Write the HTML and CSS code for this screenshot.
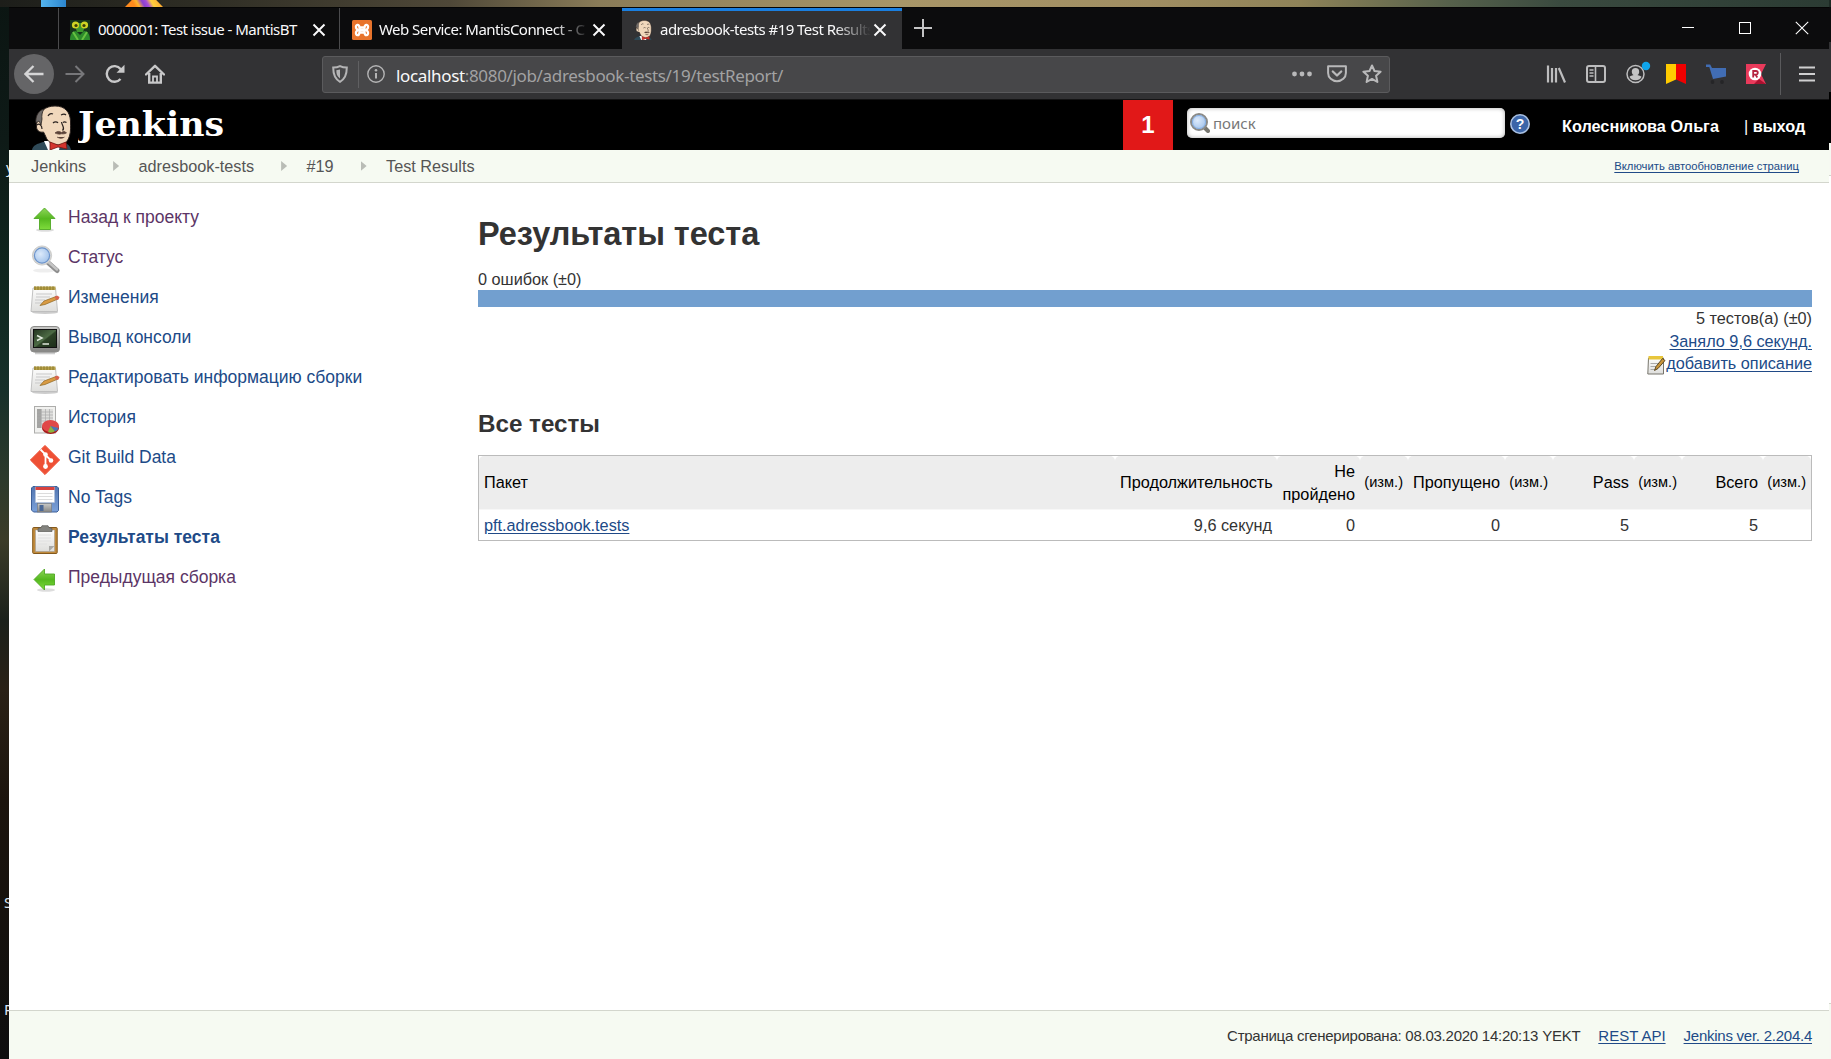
FILE: index.html
```html
<!DOCTYPE html>
<html lang="ru">
<head>
<meta charset="utf-8">
<title>adresbook-tests #19 Test Results [Jenkins]</title>
<link rel="stylesheet" href="styles.css">
</head>
<body>
<svg class="defs" width="0" height="0" aria-hidden="true">
  <defs>
    <linearGradient id="gGreen" x1="0" y1="0" x2="0" y2="1"><stop offset="0" stop-color="#8fd65a"/><stop offset=".5" stop-color="#55b81f"/><stop offset="1" stop-color="#7fdc3c"/></linearGradient>
    <linearGradient id="gPaper" x1="0" y1="0" x2="0" y2="1"><stop offset="0" stop-color="#fdfdfd"/><stop offset="1" stop-color="#dededc"/></linearGradient>
    <radialGradient id="gLens" cx=".4" cy=".4" r=".7"><stop offset="0" stop-color="#dceafb"/><stop offset="1" stop-color="#9dbfe9"/></radialGradient>
    <linearGradient id="gScreen" x1="0" y1="0" x2="1" y2="1"><stop offset="0" stop-color="#22331f"/><stop offset=".5" stop-color="#4d6b45"/><stop offset=".55" stop-color="#2c4226"/><stop offset="1" stop-color="#1c2d19"/></linearGradient>
    <linearGradient id="gSteel" x1="0" y1="0" x2="0" y2="1"><stop offset="0" stop-color="#c9c9c7"/><stop offset="1" stop-color="#858583"/></linearGradient>
    <linearGradient id="gFloppy" x1="0" y1="0" x2="0" y2="1"><stop offset="0" stop-color="#5376b0"/><stop offset="1" stop-color="#7ba1da"/></linearGradient>
  </defs>
  <symbol id="butler" viewBox="0 0 40 45">
    <path d="M0 45c1-5 5-6 11-8l18 0c6 1 9 3 10 8z" fill="#2f4a58"/>
    <path d="M12 36l17 0-2 9-11 0z" fill="#fff"/>
    <path d="M5 17C6 6 14 1 23 1c10 0 15 6 15.500 15 0 6 .5 10-1 15-2 6-5 9-11 9-6 0-11-3-13-9l-2-4c-4 1-7-2-7-5 0-3 0-4 .5-5z" fill="#f1d8bc" stroke="#2b2320" stroke-width="1"/>
    <path d="M4 18C3 11 7 5 12 4c-2 3-2.500 7-2 10l-1 6-2-4z" fill="#6f6b69" stroke="#2b2320" stroke-width=".8"/>
    <path d="M5 20c2-2 5 0 5 4M16 11c1-2 3-3 5-2M29 10c2-1 4-1 5 0M21 18c1.500-1.500 4-1.500 5 0M31 17.500c1-1 2-1 3.500 0M29.500 17c.5 4 4 6 1 8.500" fill="none" stroke="#2b2320" stroke-width="1.200"/>
    <path d="M23 28c2-2 4.500-2 6.500-.5 2-1.500 3.500-1.500 5 .5-2.500 1-3.500 1-5 .8-2 .7-4 .4-6.500-.8zM25 32c3 1.800 5 1.800 7.500 0" fill="#5a4238" stroke="#5a4238" stroke-width=".7"/>
    <path d="M18 37l8 3 8-3 1 7-9-2-8 3z" fill="#d4342d" stroke="#70150f" stroke-width=".8"/>
  </symbol>
  <symbol id="arrow-up" viewBox="0 0 30 30"><ellipse cx="15" cy="25" rx="9" ry="1.8" fill="#0002"/><path d="M14.500 3L25 13.500H20.500V24.500H9.500V13.500H4z" fill="url(#gGreen)" stroke="#4fa824" stroke-width=".9"/></symbol>
  <symbol id="arrow-left" viewBox="0 0 30 30"><ellipse cx="16" cy="25" rx="9" ry="1.800" fill="#0002"/><path d="M4 14.500L14.500 4V9H24.500V20H14.500V25z" fill="url(#gGreen)" stroke="#4fa824" stroke-width=".9"/></symbol>
  <symbol id="lens" viewBox="0 0 30 30"><ellipse cx="14" cy="25.500" rx="11" ry="2" fill="#0001"/><path d="M18.500 18L27 25.500" stroke="#8e8e8e" stroke-width="5" stroke-linecap="round"/><path d="M19 17.500L27 24.500" stroke="#c4c4c4" stroke-width="2.500" stroke-linecap="round"/><circle cx="12" cy="10.500" r="9.600" fill="#d8d8d6" stroke="#bdbdbb" stroke-width=".7"/><circle cx="12" cy="10.500" r="7.600" fill="url(#gLens)" stroke="#6c94cc" stroke-width="1.200"/></symbol>
  <symbol id="notepad" viewBox="0 0 30 30"><ellipse cx="15" cy="27.500" rx="13" ry="1.500" fill="#0003"/><path d="M3 3H25.500L27.500 26.500H1z" fill="url(#gPaper)" stroke="#bbb" stroke-width=".9"/><path d="M4 1.500H25.500V5H4z" fill="#b8a24a"/><path d="M5 1.200V5M8 1.200V5M11 1.200V5M14 1.200V5M17 1.200V5M20 1.200V5M23 1.200V5" stroke="#7e6c25" stroke-width=".8"/><path d="M6 9H22M6 12H20M5 15H15M5 18H12" stroke="#c9c9c9"/><path d="M10 20.500L14 16 26 11.500 28 14 15 19.500z" fill="#d99b43" stroke="#8d6420" stroke-width=".7"/><path d="M24.500 12L27 10.500 29.500 12 28.500 14.500 26.500 15z" fill="#d9624f"/></symbol>
  <symbol id="terminal" viewBox="0 0 30 30"><rect x=".5" y="1.500" width="29" height="25.500" rx="3.500" fill="url(#gSteel)" stroke="#8b8b89"/><rect x="3.500" y="4.500" width="23" height="18" fill="url(#gScreen)" stroke="#111"/><path d="M7 10.500l5 2.500-5 2.500M12.500 19H19" fill="none" stroke="#dfe8dc" stroke-width="1.500"/><path d="M5 28.300H25" stroke="#0003" stroke-width="2"/></symbol>
  <symbol id="report" viewBox="0 0 30 30"><rect x="4.500" y="1.500" width="21" height="26.500" fill="#f1f1ef" stroke="#adadab"/><path d="M7 4H23V23H7z" fill="#dededc"/><path d="M7 4H11V23H7z" fill="#a3a3a1"/><path d="M7 7H23M7 10H23M7 13H23M7 16H23M7 19H23M11.500 4V23M15.500 4V23M19.500 4V23" stroke="#aaa" stroke-width=".7"/><ellipse cx="20.500" cy="23" rx="8.500" ry="6" fill="#a51c1c"/><ellipse cx="20.500" cy="21" rx="8.500" ry="6" fill="#e04848"/><path d="M20.500 21L18 27C20 28 23 28 25 26z" fill="#8cb43f"/><path d="M20.500 21L28.500 23C28 25 26.500 26 25 26.500z" fill="#4c76b5"/></symbol>
  <symbol id="git" viewBox="0 0 30 30"><path d="M15 .4L29.600 15 15 29.600.4 15z" fill="#ee5035" stroke="#ee5035" stroke-linejoin="round"/><path d="M10.500 4.500L15.500 9.500V21M15.500 10L21 15.500" fill="none" stroke="#fff" stroke-width="1.800"/><circle cx="15.500" cy="9.500" r="2.300" fill="#fff"/><circle cx="15.500" cy="21.500" r="2.400" fill="#fff"/><circle cx="21" cy="15.500" r="2.300" fill="#fff"/></symbol>
  <symbol id="floppy" viewBox="0 0 30 30"><path d="M3 1.500H27L28.500 3V25.500L27 27H3.500L1.500 25V3z" fill="url(#gFloppy)" stroke="#3d5f98"/><rect x="5.500" y="2" width="19" height="15.500" fill="#fff" stroke="#b5c2d8" stroke-width=".6"/><path d="M5.500 2H24.500V5H5.500z" fill="#d8433f"/><path d="M7.500 8.500H22.500M7.500 11.500H22.500M7.500 14.500H22.500" stroke="#d3d3d3" stroke-width=".8"/><rect x="7.500" y="18.500" width="14" height="8.500" fill="url(#gSteel)" stroke="#777" stroke-width=".6"/><rect x="9.500" y="20" width="4" height="6" fill="#4a6796"/></symbol>
  <symbol id="clipboard" viewBox="0 0 30 30"><rect x="2.700" y="2.500" width="24.500" height="26" rx="1" fill="#c08a3c" stroke="#84591c"/><rect x="5.500" y="5" width="19" height="21.500" fill="url(#gPaper)" stroke="#999" stroke-width=".5"/><path d="M19 26.500L24.500 21H19z" fill="#a9a9a7"/><path d="M8 10H21M8 13H21M8 16H21M8 19H17" stroke="#e0e0e0"/><path d="M8 6.500V3.500L11 2.500 12 .7H18L19 2.500 22 3.500V6.500z" fill="#83837f" stroke="#5a5a58" stroke-width=".7"/></symbol>
  <symbol id="x" viewBox="0 0 14 14"><path d="M1.500 1.500L12.500 12.500M12.500 1.500L1.500 12.500" fill="none" stroke="currentColor" stroke-width="2"/></symbol>
</svg>

<div class="desktop">
  <div class="wall-top"></div>
  <div class="desk-icon desk-blue"></div>
  <div class="desk-icon desk-fox"></div>
  <span class="desk-label label-a">y</span>
  <span class="desk-label label-b">S</span>
  <span class="desk-label label-c">P</span>
  <div class="back-window"></div>

  <div class="window">
    <div class="tabstrip">
      <div class="tab-pad"></div>
      <div class="tab">
        <svg class="fav" viewBox="0 0 20 20"><rect width="20" height="20" fill="#16351b"/><path d="M0 20C0 14 3 11 6 11L10 15 14 11C18 11 20 15 20 20z" fill="#2d8c2c"/><path d="M3 12L8 20M17 12L12 20" stroke="#67c141" stroke-width="2"/><path d="M4 3H16L13 12H7z" fill="#3f982d"/><circle cx="5.500" cy="5" r="3.600" fill="#cfd424"/><circle cx="14.500" cy="5" r="3.600" fill="#cfd424"/><circle cx="6" cy="5.500" r="1.600" fill="#3a3d08"/><circle cx="14" cy="5.500" r="1.600" fill="#3a3d08"/></svg>
        <span class="tab-title t1">0000001: Test issue - MantisBT</span>
        <svg class="tab-x"><use href="#x"/></svg>
      </div>
      <div class="tab">
        <svg class="fav" viewBox="0 0 20 20"><rect width="20" height="20" rx="1.500" fill="#e8742c"/><path d="M7.500 7.500H12.500V12.500H7.500zM7.500 7.500C7 3.500 3.500 4.500 4 7.300 4 9 5.500 9 5.500 10S4 11 4 12.700C3.500 15.500 7 16.500 7.500 12.500M12.500 7.500C13 3.500 16.500 4.500 16 7.300 16 9 14.500 9 14.500 10S16 11 16 12.700C16.500 15.500 13 16.500 12.500 12.500" fill="none" stroke="#fff" stroke-width="2.300"/><rect x="7" y="8.600" width="6" height="2.800" fill="#fff"/></svg>
        <span class="tab-title fade t2">Web Service: MantisConnect - С</span>
        <svg class="tab-x"><use href="#x"/></svg>
      </div>
      <div class="tab active">
        <svg class="fav"><use href="#butler"/></svg>
        <span class="tab-title fade t3">adresbook-tests #19 Test Results</span>
        <svg class="tab-x"><use href="#x"/></svg>
      </div>
      <svg class="tab-new" viewBox="0 0 18 18"><path d="M9 0V18M0 9H18" stroke="#c4c4c5" stroke-width="2"/></svg>
      <div class="win-buttons">
        <svg viewBox="0 0 14 14"><path d="M1 6.500H13" stroke="#fff"/></svg>
        <svg viewBox="0 0 14 14"><rect x="1.500" y="1.500" width="11" height="11" fill="none" stroke="#fff"/></svg>
        <svg viewBox="0 0 14 14"><path d="M.8.8L13.200 13.200M13.200.8L.8 13.200" stroke="#fff" stroke-width="1.100"/></svg>
      </div>
    </div>

    <div class="toolbar">
      <div class="nav">
        <span class="back"><svg viewBox="0 0 20 20"><path d="M19.500 10H2M9.500 2L1.500 10 9.500 18" fill="none" stroke="#d6d6d7" stroke-width="2.300"/></svg></span>
        <svg viewBox="0 0 20 20"><path d="M.5 10H18M10.500 2L18.500 10 10.500 18" fill="none" stroke="#77777a" stroke-width="2"/></svg>
        <svg viewBox="0 0 20 20"><path d="M15.500 15A7.800 7.800 0 1 1 15.600 5L17.500 7.200" fill="none" stroke="#c8c8c9" stroke-width="2.400"/><path d="M19.500.8V8.800H11.500z" fill="#c8c8c9"/></svg>
        <svg viewBox="0 0 20 20"><path d="M1 10.500L10 1.800 19 10.500" fill="none" stroke="#c8c8c9" stroke-width="2.400" stroke-linecap="round" stroke-linejoin="round"/><path d="M4.200 9V18.600H15.800V9" fill="none" stroke="#c8c8c9" stroke-width="2.400"/><path d="M8 18V12.500H12V18" fill="none" stroke="#c8c8c9" stroke-width="1.800"/></svg>
      </div>
      <div class="urlbar">
        <svg class="shield" viewBox="0 0 16 18"><path d="M8 1.200C10 2.200 12.500 2.600 14.800 2.600 14.800 9.500 13.500 14 8 16.800 2.500 14 1.200 9.500 1.200 2.600 3.500 2.600 6 2.200 8 1.200z" fill="none" stroke="#b4b4b5" stroke-width="2"/><path d="M8 4.500V13.500C5 11.500 4.300 9 4.300 5.300z" fill="#b4b4b5"/></svg>
        <i class="url-sep"></i>
        <svg class="info" viewBox="0 0 18 18"><circle cx="9" cy="9" r="8.200" fill="none" stroke="#b4b4b5" stroke-width="1.400"/><path d="M9 8V13.500" stroke="#b4b4b5" stroke-width="2"/><circle cx="9" cy="5.300" r="1.300" fill="#b4b4b5"/></svg>
        <span class="url"><b>localhost</b>:8080/job/adresbook-tests/19/testReport/</span>
        <span class="url-actions">
          <svg viewBox="0 0 20 20"><circle cx="2.500" cy="10" r="2.400" fill="#b9b9ba"/><circle cx="10" cy="10" r="2.400" fill="#b9b9ba"/><circle cx="17.500" cy="10" r="2.400" fill="#b9b9ba"/></svg>
          <svg viewBox="0 0 20 20"><path d="M1.100 2.200H18.900V9A8.900 8.200 0 0 1 1.100 9z" fill="none" stroke="#b9b9ba" stroke-width="2" stroke-linejoin="round"/><path d="M5.800 7.500L10 11.500 14.200 7.500" fill="none" stroke="#b9b9ba" stroke-width="2.300" stroke-linecap="round" stroke-linejoin="round"/></svg>
          <svg viewBox="0 0 20 20"><path d="M10 1.500L12.500 7 18.600 7.700 14.100 11.800 15.400 18 10 14.900 4.600 18 5.900 11.800 1.400 7.700 7.500 7z" fill="none" stroke="#b9b9ba" stroke-width="2" stroke-linejoin="round"/></svg>
        </span>
      </div>
      <div class="tools">
        <svg viewBox="0 0 20 20"><path d="M2 1.500V18.500M6 4V18.500M10 4V18.500M12.800 4L19 18.500" fill="none" stroke="#bdbdbe" stroke-width="2.200"/></svg>
        <svg viewBox="0 0 20 20"><rect x="1" y="2" width="18" height="16" rx="2" fill="none" stroke="#bdbdbe" stroke-width="2"/><path d="M9.500 2V18" stroke="#bdbdbe" stroke-width="1.600"/><path d="M3.500 6H7.500M3.500 9H7.500M3.500 12H7.500" stroke="#bdbdbe" stroke-width="1.400"/></svg>
        <svg viewBox="0 0 20 20" overflow="visible"><circle cx="9.500" cy="10" r="8.500" fill="none" stroke="#bdbdbe" stroke-width="1.500"/><circle cx="9.500" cy="7.700" r="3.700" fill="#c4c4c5"/><path d="M3.500 12.800C6 10.500 13 10.500 15.500 12.800 14 17.500 5 17.500 3.500 12.800z" fill="#c4c4c5"/><circle cx="20" cy="2" r="4.200" fill="#0fa4ea"/></svg>
        <svg viewBox="0 0 20 20"><path d="M0 0H10V15.500L0 20z" fill="#ffcb00"/><path d="M10 0H20V20L10 15.500z" fill="#f00000"/></svg>
        <svg viewBox="0 0 20 20"><path d="M0 .5H4.200L6 4H20V12.500L7 15 3.300 3H0z" fill="#416db4"/><circle cx="6.500" cy="18" r="1.900" fill="#252527"/><circle cx="16" cy="18" r="1.900" fill="#252527"/></svg>
        <svg viewBox="0 0 20 20"><path d="M0 0H20L15 10 20 20H0z" fill="#e93a5b"/><path d="M13 15L20 20H8z" fill="#a8112f"/><circle cx="9" cy="10" r="6.300" fill="#fff"/><path d="M7.200 13.500V7H10A1.800 1.800 0 0 1 10 10.600H7.200M9.500 10.500L11.300 13.500" fill="none" stroke="#b5233f" stroke-width="1.800"/></svg>
      </div>
      <i class="tool-sep"></i>
      <svg class="menu" viewBox="0 0 16 16"><path d="M.5 1.500H15.500M.5 8H15.500M.5 14.500H15.500" stroke="#cfcfd0" stroke-width="2.200" stroke-linecap="round"/></svg>
    </div>

    <div class="page">
      <header class="jk-header">
        <svg class="jk-head"><use href="#butler"/></svg>
        <svg class="jk-word" width="150" height="50"><text x="0" y="36" textLength="146" lengthAdjust="spacingAndGlyphs">Jenkins</text></svg>
        <span class="alert">1</span>
        <div class="search">
          <svg viewBox="0 0 20 20"><path d="M14 14L18 18" stroke="#77766f" stroke-width="4" stroke-linecap="round"/><circle cx="9" cy="9" r="8" fill="url(#gLens)" stroke="#8b8b88" stroke-width="2"/><circle cx="9" cy="9" r="6.500" fill="none" stroke="#84aee4"/></svg>
          <span>поиск</span>
        </div>
        <svg class="help" viewBox="0 0 20 20"><circle cx="10" cy="10" r="9.200" fill="#3b65a8" stroke="#a9c0e2" stroke-width="1.600"/><text x="10" y="15" text-anchor="middle">?</text></svg>
        <a class="user">Колесникова Ольга</a>
        <span class="logout"><i>|</i> <a>выход</a></span>
      </header>

      <nav class="crumbs">
        <span>Jenkins</span><i></i><span>adresbook-tests</span><i></i><span>#19</span><i></i><span>Test Results</span>
        <a class="auto">Включить автообновление страниц</a>
      </nav>

      <div class="body">
        <aside class="tasks">
          <a class="visited"><svg><use href="#arrow-up"/></svg><span>Назад к проекту</span></a>
          <a class="visited"><svg><use href="#lens"/></svg><span>Статус</span></a>
          <a><svg><use href="#notepad"/></svg><span>Изменения</span></a>
          <a><svg><use href="#terminal"/></svg><span>Вывод консоли</span></a>
          <a><svg><use href="#notepad"/></svg><span>Редактировать информацию сборки</span></a>
          <a><svg><use href="#report"/></svg><span>История</span></a>
          <a><svg><use href="#git"/></svg><span>Git Build Data</span></a>
          <a><svg><use href="#floppy"/></svg><span>No Tags</span></a>
          <a class="current"><svg><use href="#clipboard"/></svg><span>Результаты теста</span></a>
          <a class="visited"><svg><use href="#arrow-left"/></svg><span>Предыдущая сборка</span></a>
        </aside>

        <main class="main">
          <h1>Результаты теста</h1>
          <div class="fails">0 ошибок (±0)</div>
          <div class="bar"></div>
          <div class="summary">
            <div>5 тестов(а) (±0)</div>
            <div><a>Заняло 9,6 секунд.</a></div>
            <div class="describe"><svg viewBox="0 0 19 20"><path d="M1.500 3H16.500V19H.8z" fill="url(#gPaper)" stroke="#77756c"/><path d="M1.500 1H16V4.500H1.500z" fill="#e8c63c"/><path d="M3.500 8.500H12M3.500 11.500H9M3.500 14.500H8" stroke="#aaa"/><path d="M7.500 15.500L9 11.500 15.500 3.500 18 5.500 11 13.500z" fill="#c9953b" stroke="#4d3b17" stroke-width=".9"/></svg><a>добавить описание</a></div>
          </div>
          <h2>Все тесты</h2>
          <table class="results">
            <colgroup><col class="w636"><col class="w162"><col class="w83"><col class="w48"><col class="w97"><col class="w48"><col class="w81"><col class="w48"><col class="w81"><col class="w48"></colgroup>
            <thead>
              <tr><th class="pkg">Пакет</th><th>Продолжительность</th><th>Не пройдено</th><th class="diff">(изм.)</th><th>Пропущено</th><th class="diff">(изм.)</th><th>Pass</th><th class="diff">(изм.)</th><th>Всего</th><th class="diff">(изм.)</th></tr>
            </thead>
            <tbody>
              <tr><td class="pkg"><a>pft.adressbook.tests</a></td><td>9,6 секунд</td><td>0</td><td></td><td>0</td><td></td><td>5</td><td></td><td>5</td><td></td></tr>
            </tbody>
          </table>
        </main>
      </div>

      <footer class="footer">
        <span>Страница сгенерирована: 08.03.2020 14:20:13 YEKT</span>
        <a class="api">REST API</a>
        <a>Jenkins ver. 2.204.4</a>
      </footer>
    </div>
  </div>
</div>
</body>
</html>
```
FILE: styles.css
```css
* { box-sizing: border-box; }
body { margin: 0; overflow: hidden; font-family: "Liberation Sans", Arial, sans-serif; font-size: 16.25px; color: #333; }
svg { display: block; flex: none; }
.defs { position: absolute; }
i { font-style: normal; }

/* Desktop behind the browser */
.desktop { position: relative; width: 1831px; height: 1059px; padding: 7px 2px 0 9px; overflow: hidden;
  background: linear-gradient(#0b1512 0, #0e1a17 140px, #10271f 280px, #17302a 390px, #2d3a2c 480px, #3c3c28 540px, #1b211b 620px, #2a2116 690px, #1c140d 800px, #15110d 930px, #0e0e0e 1059px); }
.wall-top { position: absolute; left: 0; top: 0; width: 1831px; height: 7px;
  background: linear-gradient(90deg, #1d1e1a 0, #2e2d24 200px, #4f4838 450px, #8a7c58 600px, #a89668 900px, #a08e62 1150px, #8f8358 1300px, #56614b 1450px, #3a4a3f 1560px, #2b3b33 1831px); }
.desk-icon { position: absolute; top: 0; height: 7px; }
.desk-blue { left: 41px; width: 25px; background: linear-gradient(90deg, #54b4ee, #2c86cf); }
.desk-fox { left: 125px; width: 38px; clip-path: polygon(18% 0, 82% 0, 100% 100%, 0 100%); background: linear-gradient(60deg, #ff8a1c 0 25%, #ffb52b 35%, #8b3fd0 48%, #a64bd8 58%, #ffcf3d 70%, #ff9a2a); }
.desk-label { position: absolute; font: 15px "Noto Sans", sans-serif; color: #dfe6f2; }
.label-a { left: 6px; top: 157px; }
.label-b { left: 4px; top: 892px; }
.label-c { left: 4px; top: 999px; }
.back-window { position: absolute; left: 1829px; top: 0; width: 2px; height: 1059px;
  background: linear-gradient(#1d2a24 0 7px, #0c0c0d 7px 42px, #323234 42px 92px, #000 92px 143px, #f6f9f2 143px 175px, #d3d6cd 175px 176px, #fff 176px 1003px, #d3d6cd 1003px 1004px, #f6f9f2 1004px); }

.window { position: relative; display: flex; flex-direction: column; height: 1052px; }

/* Tabs */
.tabstrip { display: flex; align-items: stretch; height: 42px; background: #0c0c0d; border-top: 1px solid #050505; }
.tab-pad { width: 49px; }
.tab { display: flex; align-items: center; width: 281px; border-left: 1px solid #4b4b4d; padding-left: 11px; color: #f9f9fa; }
.tab + .tab { width: 283px; padding-left: 12px; }
.tab .fav { width: 20px; height: 20px; margin-top: 2px; }
.tab-title { margin-left: 8px; overflow: hidden; white-space: nowrap; font: 15px "Noto Sans", sans-serif; letter-spacing: -.53px; }
.t1 { width: 214px; }
.t2, .t3 { width: 213px; }
.tab .t2, .tab .t3 { margin-left: 7px; }
.fade { mask-image: linear-gradient(90deg, #000 82%, transparent 99%); }
.tab-x { width: 14px; height: 14px; margin-top: 2px; }
.tab.active { width: 280px; background: #323234; border-left: 0; border-top: 3px solid #1a7fe0; padding-left: 11px; }
.tab.active .fav, .tab.active .tab-x { margin-top: -1px; }
.tab.active .tab-title { margin-top: -3px; }
.tab-new { width: 18px; height: 18px; margin: 11px 0 0 12px; }
.win-buttons { display: flex; align-items: center; gap: 43px; margin-left: auto; padding-right: 20px; }
.win-buttons svg { width: 14px; height: 14px; margin-top: -1px; }

/* Toolbar */
.toolbar { display: flex; align-items: center; height: 50px; background: #323234; padding-left: 5px; }
.nav { display: flex; align-items: center; gap: 20px; width: 308px; }
.nav svg { width: 20px; height: 20px; }
.nav .back { display: flex; align-items: center; justify-content: center; width: 40px; height: 40px; margin-right: -9px; border-radius: 50%; background: #656567; }
.urlbar { display: flex; align-items: center; width: 1068px; height: 37px; background: #474749; border: 1px solid #5b5b5d; border-radius: 3px; padding-left: 9px; }
.shield { width: 16px; height: 18px; }
.url-sep { width: 1px; height: 27px; margin: 0 8px 0 10px; background: #606062; }
.info { width: 18px; height: 18px; }
.url { margin: 2px 0 0 11px; font: 17px "Noto Sans", sans-serif; letter-spacing: -.34px; color: #a2a2a3; white-space: nowrap; }
.url b { font-weight: 400; color: #f9f9fa; }
.url-actions { display: flex; gap: 15px; margin-left: auto; padding-right: 7px; }
.url-actions svg, .tools svg { width: 20px; height: 20px; }
.tools { display: flex; gap: 20px; margin-left: 156px; }
.tool-sep { width: 1px; height: 42px; margin-left: 14px; background: #5a5a5c; }
.menu { width: 16px; height: 16px; margin-left: 18px; }

/* Jenkins header */
.page { display: flex; flex-direction: column; flex: 1; background: #fff; }
.jk-header { display: flex; align-items: center; height: 51px; padding-left: 23px; background: #000; border-top: 1px solid #141415; }
.jk-head { width: 40px; height: 45px; margin-top: 5px; }
.jk-word { margin-left: 6px; }
.jk-word text { font: bold 33px "DejaVu Serif", serif; fill: #fff; }
.alert { width: 50px; height: 50px; margin-left: auto; background: #e11818; color: #fff; font-weight: 700; font-size: 24px; line-height: 50px; text-align: center; }
.search { display: flex; align-items: center; gap: 3px; width: 318px; height: 30px; margin: -4px 0 0 14px; padding-left: 3px; background: #fff; border-radius: 5px; box-shadow: inset 0 0 4px #aaa; }
.search svg { width: 20px; height: 20px; margin-top: -1px; }
.search span { font: 15px "Noto Sans", sans-serif; color: #777; }
.help { width: 20px; height: 20px; margin: -2px 0 0 5px; }
.help text { font: bold 14px "Liberation Sans", sans-serif; fill: #fff; }
.user { margin: 3px 0 0 32px; width: 157px; color: #fff; font-weight: 700; white-space: nowrap; }
.logout { margin: 3px 25px 0 25px; width: 60px; color: #fff; font-weight: 700; white-space: nowrap; }
.logout a { color: #fff; }
.logout i { font-weight: 400; }

/* Breadcrumbs */
.crumbs { display: flex; align-items: center; height: 33px; padding: 0 30px 0 22px; background: #f6faf2; border-bottom: 1px solid #d3d6cd; white-space: nowrap; }
.crumbs span { color: #555; }
.crumbs i { width: 6px; height: 10px; margin: 0 19.400px 0 27px; background: #b9bcb6; clip-path: polygon(0 0, 100% 50%, 0 100%); }
a { color: #204a87; }
.crumbs .auto { margin-left: auto; font-size: 11.250px; }
.auto, .summary a, .results a, .footer a { text-decoration: underline; text-underline-offset: 2px; text-decoration-thickness: 1px; }

.body { display: flex; flex: 1; }
.tasks { display: flex; flex-direction: column; gap: 10px; width: 469px; padding: 21px 0 0 21px; font-size: 17.500px; }
.tasks a { display: flex; height: 30px; gap: 8px; white-space: nowrap; }
.tasks svg { width: 30px; height: 30px; margin-top: .6px; }
.tasks span { margin-top: 3px; line-height: 20px; }
.tasks .visited { color: #5c3566; }
.tasks .current { font-weight: 700; }

.main { width: 1334px; padding-top: 31px; }
h1 { margin: 0; font-size: 32.500px; line-height: 40px; letter-spacing: -.05px; }
.fails { margin-top: 15px; line-height: 21px; }
.bar { height: 17px; background: #729fcf; }
.summary { display: flex; flex-direction: column; align-items: flex-end; line-height: 22.500px; }
.describe { display: flex; }
.describe svg { width: 19px; height: 20px; margin-top: 3px; }
h2 { margin: 34px 0 0; font-size: 24.200px; line-height: 30px; }

.results { width: 1334px; margin-top: 16px; table-layout: fixed; border-collapse: separate; border-spacing: 0; border: 1px solid #bbb; }
.results th { height: 54px; padding: 0 5px; background: #ededed; border-bottom: 1px solid #f7f7f7; border-radius: 5px 5px 0 0; color: #000; font-weight: 400; text-align: right; line-height: 23px; }
.results td { height: 30px; padding: 0 5px; text-align: right; }
.results .pkg { text-align: left; }
.results .diff { padding: 0 5px 0 0; font-size: 14.600px; white-space: nowrap; }
.w636 { width: 636px; } .w162 { width: 162px; } .w83 { width: 83px; } .w48 { width: 48px; } .w97 { width: 97px; } .w81 { width: 81px; }

.footer { display: flex; align-items: center; justify-content: flex-end; gap: 18px; height: 49px; padding: 0 17px 0 0; background: #f6faf2; border-top: 1px solid #d3d6cd; font-size: 15px; letter-spacing: -.25px; }
.footer .api { letter-spacing: 0; }
```
